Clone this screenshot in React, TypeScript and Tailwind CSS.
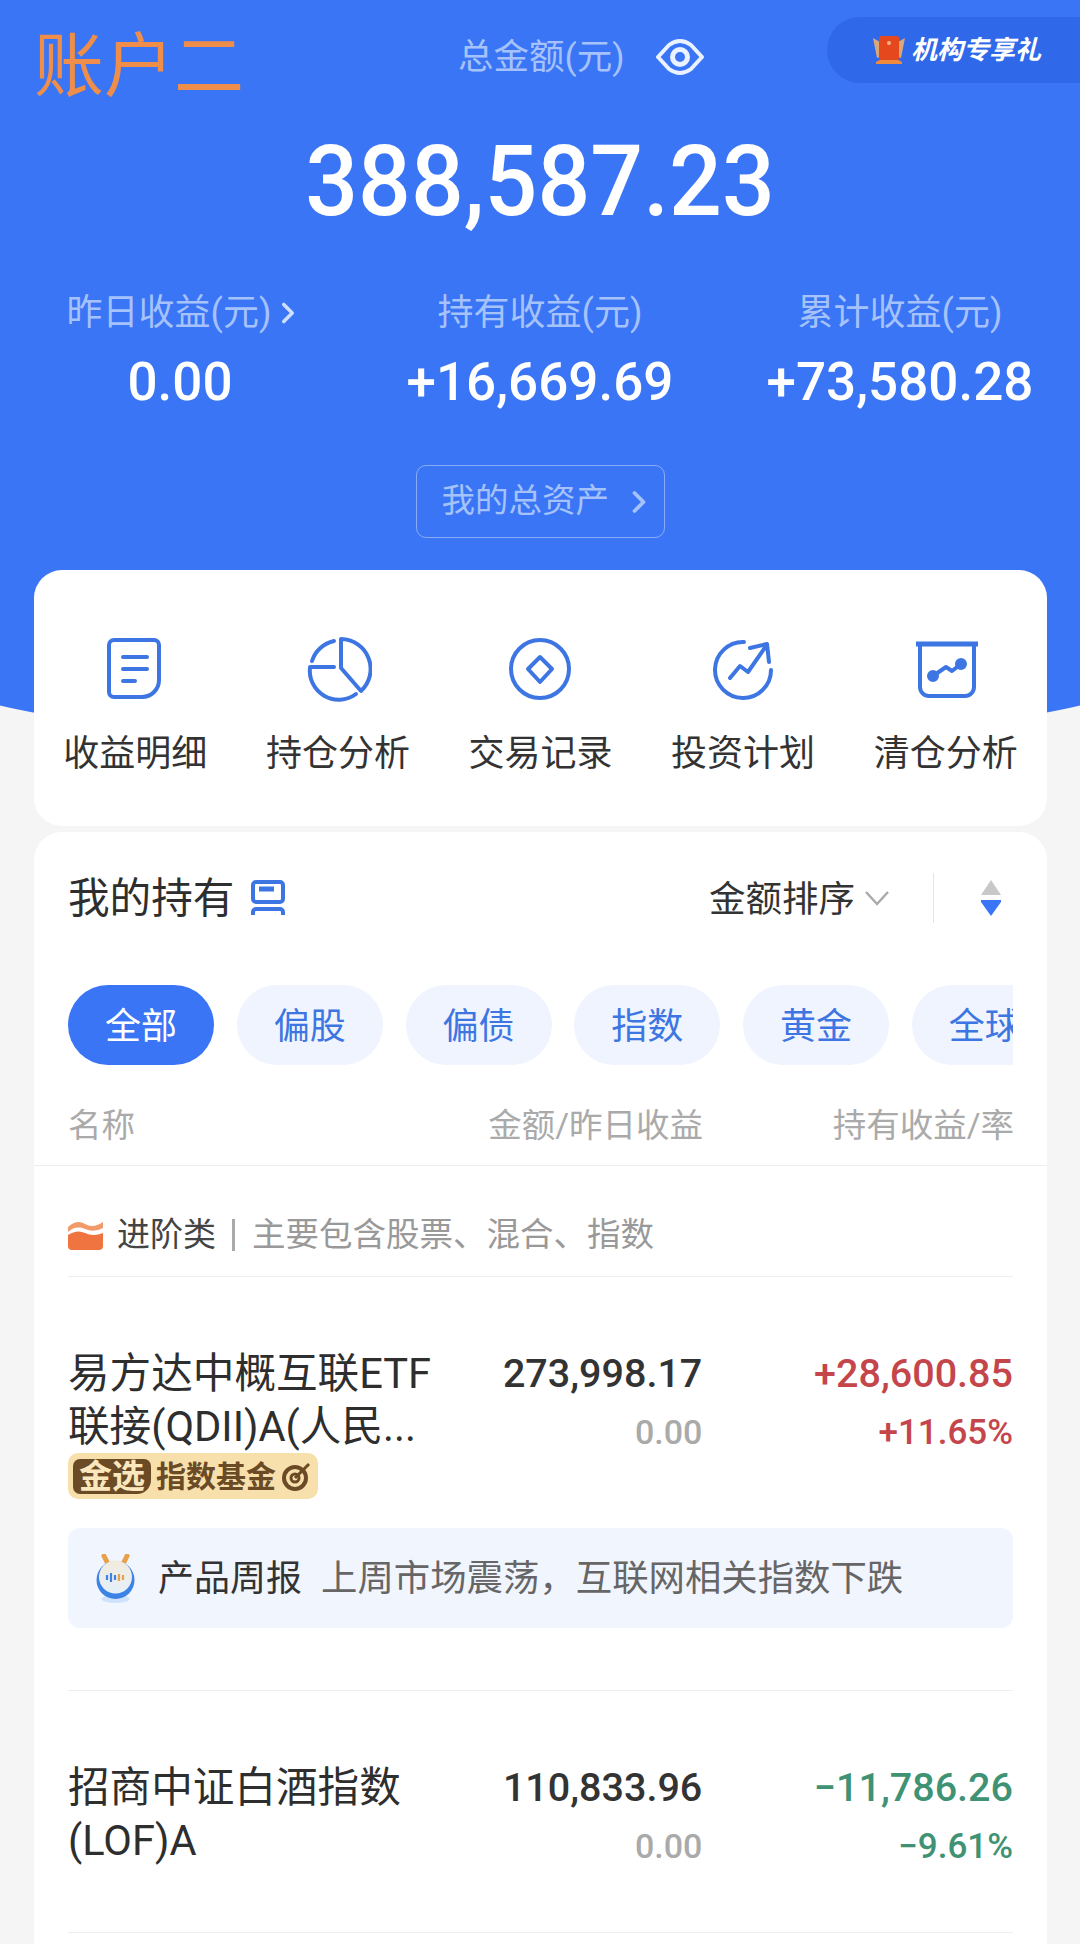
import { ChevronRight } from 'lucide-react';

const stats = [
  { label: '昨日收益(元)', value: '0.00', arrow: true },
  { label: '持有收益(元)', value: '+16,669.69', arrow: false },
  { label: '累计收益(元)', value: '+73,580.28', arrow: false },
];

const chips = ['全部', '偏股', '偏债', '指数', '黄金', '全球'];

const iconProps = {
  width: 68,
  height: 68,
  viewBox: '0 0 68 68',
  fill: 'none',
  stroke: '#3d76e2',
  strokeWidth: 4,
  strokeLinecap: 'round' as const,
  strokeLinejoin: 'round' as const,
};

const shortcuts = [
  {
    label: '收益明细',
    icon: (
      <svg {...iconProps}>
        <path d="M13 5h40a5 5 0 0 1 5 5v35a17 17 0 0 1-17 17H13a5 5 0 0 1-5-5V10a5 5 0 0 1 5-5z" />
        <path d="M22 22h24M22 34h24M22 46h12" />
      </svg>
    ),
  },
  {
    label: '持仓分析',
    icon: (
      <svg {...iconProps}>
        <path d="M37 4V33L57 56A30 30 0 0 0 37 4z" />
        <path d="M30 6A30 30 0 0 0 8 26M30 32H6A29 29 0 0 0 52 59" />
      </svg>
    ),
  },
  {
    label: '交易记录',
    icon: (
      <svg {...iconProps}>
        <circle cx="34" cy="34" r="29" />
        <path d="M34 22L46 34L34 47L22 34z" />
      </svg>
    ),
  },
  {
    label: '投资计划',
    icon: (
      <svg {...iconProps}>
        <path d="M35 7A28 28 0 1 0 62 35" />
        <path d="M21 43L31 31L39 37L57 11M41 13L58 9L60 27" />
      </svg>
    ),
  },
  {
    label: '清仓分析',
    icon: (
      <svg {...iconProps}>
        <path d="M4 9H66" strokeWidth={5} strokeLinecap="butt" />
        <path d="M8 9V52a9 9 0 0 0 9 9H53a9 9 0 0 0 9-9V9" />
        <path d="M21 41L34 32L40 36L49 29" />
        <circle cx="21" cy="41" r="4" fill="#3d76e2" />
        <circle cx="49" cy="29" r="4" fill="#3d76e2" />
      </svg>
    ),
  },
];

function FundRow({
  name,
  amount,
  change,
  rate,
  color,
}: {
  name: string[];
  amount: string;
  change: string;
  rate: string;
  color: string;
}) {
  return (
    <div className="flex">
      <div className="w-[375px] text-[41.6px] leading-[53px] text-[#2e2e2e] whitespace-nowrap">
        {name.map((line) => (
          <div key={line}>{line}</div>
        ))}
      </div>
      <div className="w-[260px] text-right">
        <div className="text-[39.5px] leading-[53px] font-medium text-[#333]">{amount}</div>
        <div className="mt-[6px] text-[34px] leading-[53px] font-medium text-[#aaa]">0.00</div>
      </div>
      <div className={`w-[311px] text-right font-medium ${color}`}>
        <div className="text-[39.5px] leading-[53px]">{change}</div>
        <div className="mt-[6px] text-[35px] leading-[53px]">{rate}</div>
      </div>
    </div>
  );
}

export default function App() {
  return (
    <div className="relative w-[1080px] h-[1944px] overflow-hidden bg-[#f5f5f5] font-[Roboto,'Noto_Sans_CJK_SC',sans-serif]">
      {/* blue backdrop with curved bottom */}
      <div className="absolute top-0 left-[-60px] w-[1200px] h-[745px] bg-[#3a75f5] rounded-b-[50%_70px]" />

      <div className="relative h-[570px]">
        <div className="absolute left-[34px] top-[19px] text-[70px] leading-[96px] text-[#ee8e4a]">账户二</div>
        <div className="absolute right-0 top-[17px] h-[66px] w-[253px] rounded-l-[33px] bg-[#2f68e8] flex items-center pl-[46px] gap-[6px]">
          <svg width="32" height="28" viewBox="0 0 32 28">
            <path d="M0 2l7 4v15l-3 1zM32 2l-7 4v15l3 1z" fill="#d9a878" />
            <path d="M3 26q13-8 26 0v2H3z" fill="#f08a3c" />
            <rect x="6" y="0" width="20" height="24" rx="2" fill="#e4481c" />
            <circle cx="16" cy="7" r="2" fill="#f4b183" />
          </svg>
          <span className="text-[26px] italic font-bold text-white leading-none whitespace-nowrap">机构专享礼</span>
        </div>

        <div className="pt-[30px] h-[128px] pl-[458px] flex items-start">
          <div className="flex items-center gap-[30px]">
            <span className="text-[35.5px] leading-[54px] text-[#a5c2fb] whitespace-nowrap">总金额(元)</span>
            <svg width="50" height="38" viewBox="0 0 50 38" fill="none" stroke="#eaf1ff" strokeWidth="4">
              <path d="M3 19L14 7Q25 -1 36 7L47 19L36 31Q25 39 14 31z" strokeLinejoin="round" />
              <circle cx="25" cy="19" r="7.5" strokeWidth="5" />
            </svg>
          </div>
        </div>

        <div className="text-center text-[93px] leading-[108px] font-medium text-white scale-y-[1.06]">388,587.23</div>

        <div className="mt-[52px] grid grid-cols-3 text-center">
          {stats.map((s) => (
            <div key={s.label}>
              <div
                className={`flex items-center justify-center text-[36px] leading-[50px] text-[#a5c2fb] whitespace-nowrap ${
                  s.arrow ? 'pl-[12px]' : ''
                }`}
              >
                {s.label}
                {s.arrow && <ChevronRight size={34} strokeWidth={2.5} className="text-[#cfe0ff]" />}
              </div>
              <div className="mt-[16px] text-[53px] leading-[56px] font-medium text-white">{s.value}</div>
            </div>
          ))}
        </div>

        <div className="mt-[55px] flex justify-center">
          <div className="h-[73px] w-[249px] pl-[25px] flex items-center gap-[12px] rounded-[10px] border border-white/40 text-[33.5px] text-[#a5c2fb] whitespace-nowrap">
            我的总资产
            <ChevronRight size={36} strokeWidth={2.5} />
          </div>
        </div>
      </div>

      <div className="relative ml-[34px] mr-[33px] h-[256px] rounded-[28px] bg-white grid grid-cols-5 pt-[65px]">
        {shortcuts.map((s) => (
          <div key={s.label} className="flex flex-col items-center">
            <div className="h-[68px]">{s.icon}</div>
            <div className="mt-[26px] text-[36px] leading-[50px] text-[#333] whitespace-nowrap">{s.label}</div>
          </div>
        ))}
      </div>

      <div className="relative mt-[6px] ml-[34px] mr-[33px] rounded-t-[28px] bg-white h-[1200px]">
        <div className="px-[34px] pt-[33px] flex items-center h-[98px]">
          <span className="pt-[1px] text-[41.6px] leading-[65px] text-[#2e2e2e]">我的持有</span>
          <svg className="ml-[17px]" width="34" height="35" viewBox="0 0 34 35" fill="none" stroke="#3d76e2" strokeWidth="4">
            <rect x="2" y="2" width="30" height="20" rx="3" />
            <path d="M8 9h15" strokeWidth="5" />
            <path d="M2 35v-3a3 3 0 0 1 3-3h24a3 3 0 0 1 3 3v3" />
          </svg>
          <span className="ml-auto pt-[3px] text-[36.5px] leading-[65px] text-[#333]">金额排序</span>
          <svg className="ml-[9px]" width="26" height="16" viewBox="0 0 26 16" fill="none" stroke="#aaa" strokeWidth="2.5">
            <path d="M2 2l11 12L24 2" />
          </svg>
          <div className="ml-[43px] w-px h-[50px] bg-[#e5e5e5]" />
          <svg className="ml-[46px] mr-[11px]" width="22" height="36" viewBox="0 0 22 36">
            <path d="M11 0L21 15H1z" fill="#c8c8c8" />
            <path d="M1 20h20v2L11 36 1 22z" fill="#3a75f5" />
          </svg>
        </div>

        <div className="mt-[55px] mx-[34px] h-[80px] flex gap-[22.75px] overflow-hidden">
          {chips.map((c, i) => (
            <div
              key={c}
              className={`shrink-0 w-[146px] h-[80px] pt-[3px] rounded-full flex items-center justify-center text-[36px] ${
                i === 0 ? 'bg-[#3a75f5] text-white' : 'bg-[#eff4fe] text-[#3d76e2]'
              }`}
            >
              {c}
            </div>
          ))}
        </div>

        <div className="h-[101px] pt-[23px] pl-[34px] flex items-center border-b border-[#eeeeee] text-[33.5px] text-[#aaa] whitespace-nowrap">
          <span className="w-[375px]">名称</span>
          <span className="w-[260px] text-right">金额/昨日收益</span>
          <span className="w-[311px] text-right">持有收益/率</span>
        </div>

        <div className="mx-[34px] h-[111px] pt-[28px] flex items-center border-b border-[#eeeeee] text-[33px] whitespace-nowrap">
          <svg width="35" height="31" viewBox="0 0 35 31">
            <path d="M0 7q9-8 17-3t18-2v6q-9 5-18 1T0 12z" fill="#f19a6a" />
            <path d="M0 15q9-6 17-2t18 0v13a4 4 0 0 1-4 4H4a4 4 0 0 1-4-4z" fill="#ef7440" />
          </svg>
          <span className="ml-[14px] text-[#444]">进阶类</span>
          <span className="ml-[16px] w-[3px] h-[32px] bg-[#aaa]" />
          <span className="ml-[17px] text-[#999] text-[33.5px]">主要包含股票、混合、指数</span>
        </div>

        <div className="mx-[34px] pt-[70px] pb-[62px] border-b border-[#eeeeee]">
          <FundRow
            name={['易方达中概互联ETF', '联接(QDII)A(人民...']}
            amount="273,998.17"
            change="+28,600.85"
            rate="+11.65%"
            color="text-[#c4464b]"
          />
          <div className="w-[250px] h-[46px] -mt-[6px] rounded-[10px] bg-[#f8e0ac] flex items-center pl-[5px]">
            <span className="h-[35px] w-[78px] rounded-l-[7px] rounded-tr-[7px] rounded-br-[14px] bg-[#6b4a26] text-[#fbe7bd] text-[33px] font-bold leading-[35px] text-center whitespace-nowrap">
              金选
            </span>
            <span className="ml-[5px] text-[30px] font-bold text-[#6b4a26] whitespace-nowrap">指数基金</span>
            <svg className="ml-[6px]" width="30" height="30" viewBox="0 0 30 30" fill="none" stroke="#6b4a26">
              <circle cx="13" cy="17" r="11" strokeWidth="4" />
              <circle cx="13" cy="17" r="4" strokeWidth="3" />
              <path d="M13 17L27 3" strokeWidth="3" />
            </svg>
          </div>
          <div className="mt-[29px] h-[100px] rounded-[12px] bg-[#f1f5fe] flex items-center pl-[27px] whitespace-nowrap">
            <svg width="41" height="49" viewBox="0 0 41 49">
              <defs>
                <linearGradient id="robotFace" x1="0" y1="0" x2="0" y2="1">
                  <stop offset="0" stopColor="#f1ebdc" />
                  <stop offset="1" stopColor="#e6f0fb" />
                </linearGradient>
              </defs>
              <path d="M9 2l5 10M32 2l-5 10" stroke="#e8a04c" strokeWidth="5" strokeLinecap="round" />
              <ellipse cx="20.5" cy="45" rx="14" ry="4" fill="#cfe2fb" />
              <circle cx="20.5" cy="26" r="19" fill="#3d83e6" />
              <circle cx="20.5" cy="23" r="16.5" fill="url(#robotFace)" />
              <path d="M12 21v5M16 19v9M20 21v5" stroke="#3d83e6" strokeWidth="2.2" />
              <path d="M24 20v7M28 21v5" stroke="#e8a04c" strokeWidth="2.2" />
            </svg>
            <span className="ml-[22px] pt-[2px] text-[36px] text-[#333]">产品周报</span>
            <span className="ml-[19px] pt-[2px] text-[36.4px] text-[#666]">上周市场震荡，互联网相关指数下跌</span>
          </div>
        </div>

        <div className="mx-[34px] pt-[70px] pb-[59px] border-b border-[#eeeeee]">
          <FundRow
            name={['招商中证白酒指数', '(LOF)A']}
            amount="110,833.96"
            change="−11,786.26"
            rate="−9.61%"
            color="text-[#3f9274]"
          />
        </div>
      </div>
    </div>
  );
}
